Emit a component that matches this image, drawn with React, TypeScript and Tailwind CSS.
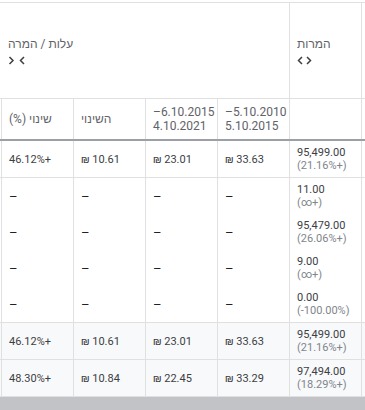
import { Fragment } from "react";

type Metric = { value: string; change: string };

const dataRows = [
  { pct: "46.12%+", diff: "₪ 10.61", a: "₪ 23.01", b: "₪ 33.63", conv: { value: "95,499.00", change: "(21.16%+)" } },
];

const subRows: Metric[] = [
  { value: "11.00", change: "(∞+)" },
  { value: "95,479.00", change: "(26.06%+)" },
  { value: "9.00", change: "(∞+)" },
  { value: "0.00", change: "(-100.00%)" },
];

const totals = [
  { pct: "46.12%+", diff: "₪ 10.61", a: "₪ 23.01", b: "₪ 33.63", conv: { value: "95,499.00", change: "(21.16%+)" } },
  { pct: "48.30%+", diff: "₪ 10.84", a: "₪ 22.45", b: "₪ 33.29", conv: { value: "97,494.00", change: "(18.29%+)" } },
];

function SortIcon({ outward }: { outward?: boolean }) {
  return outward ? (
    <svg width="16" height="9" viewBox="0 0 16 9" fill="none" stroke="#3c4043" strokeWidth="1.5">
      <path d="M5 1 L1.5 4.5 L5 8" />
      <path d="M10 1 L13.5 4.5 L10 8" />
    </svg>
  ) : (
    <svg width="18" height="9" viewBox="0 0 18 9" fill="none" stroke="#3c4043" strokeWidth="1.5">
      <path d="M1.5 1 L5 4.5 L1.5 8" />
      <path d="M16 1 L12.5 4.5 L16 8" />
    </svg>
  );
}

function Cell({ children }: { children?: React.ReactNode }) {
  return (
    <div className="w-[72px] shrink-0 border-r border-[#e0e0e0] pl-[7px] flex flex-col justify-center text-[11px] leading-[13px] text-[#3c4043]">
      {children}
    </div>
  );
}

function Dash() {
  return (
    <Cell>
      <span className="text-[13px] text-[#202124]">–</span>
    </Cell>
  );
}

function ConvCell({ m }: { m: Metric }) {
  return (
    <Cell>
      <span>{m.value}</span>
      <span className="text-[#80868b]">{m.change}</span>
    </Cell>
  );
}

function Edge() {
  return <div className="w-[2px] shrink-0 border-r border-[#e0e0e0]" />;
}

export default function App() {
  return (
    <div className="w-[365px] h-[410px] overflow-hidden bg-white pt-[2px] font-['Roboto','Liberation_Sans',sans-serif]">
      <div className="border-t border-[#e0e0e0]">
        {/* group header */}
        <div className="flex h-[96px] border-b border-[#e0e0e0]">
          <div className="w-[2px] shrink-0" />
          <div className="w-[288px] shrink-0 border-r border-[#e0e0e0] pl-[6px] flex flex-col justify-center gap-[5px]">
            <span dir="rtl" className="self-start text-[12px] leading-[14px] text-[#5f6368]">
              עלות / המרה
            </span>
            <SortIcon />
          </div>
          <div className="w-[72px] shrink-0 border-r border-[#e0e0e0] pl-[7px] flex flex-col justify-center gap-[5px]">
            <span dir="rtl" className="self-start text-[12px] leading-[14px] text-[#5f6368]">
              המרות
            </span>
            <SortIcon outward />
          </div>
          <div className="flex-1" />
        </div>

        {/* column header */}
        <div className="flex h-[42px] border-b-2 border-[#9aa0a6] text-[12px] leading-[14px] text-[#5f6368]">
          <Edge />
          <div className="w-[72px] shrink-0 border-r border-[#e0e0e0] pl-[7px] flex items-center">
            <span dir="rtl">שינוי (%)</span>
          </div>
          <div className="w-[72px] shrink-0 border-r border-[#e0e0e0] pl-[7px] flex items-center">
            <span dir="rtl">השינוי</span>
          </div>
          <div className="w-[72px] shrink-0 border-r border-[#e0e0e0] pl-[7px] flex flex-col justify-center">
            <span>–6.10.2015</span>
            <span>4.10.2021</span>
          </div>
          <div className="w-[72px] shrink-0 border-r border-[#e0e0e0] pl-[7px] flex flex-col justify-center">
            <span>–5.10.2010</span>
            <span>5.10.2015</span>
          </div>
          <div className="w-[72px] shrink-0 border-r border-[#e0e0e0]" />
          <div className="flex-1" />
        </div>

        {dataRows.map((r, i) => (
          <div key={i} className="flex h-[37px] border-b border-[#e0e0e0]">
            <Edge />
            <Cell>{r.pct}</Cell>
            <Cell>{r.diff}</Cell>
            <Cell>{r.a}</Cell>
            <Cell>{r.b}</Cell>
            <ConvCell m={r.conv} />
            <div className="flex-1" />
          </div>
        ))}

        {/* breakdown rows */}
        <div className="border-b border-[#e0e0e0]">
          {subRows.map((m, i) => (
            <div key={i} className="flex h-[36px]">
              <Edge />
              <Dash />
              <Dash />
              <Dash />
              <Dash />
              <ConvCell m={m} />
              <div className="flex-1" />
            </div>
          ))}
        </div>

        {totals.map((r, i) => (
          <Fragment key={i}>
            <div className="flex h-[37px] border-b border-[#e0e0e0] bg-[#f8f9fa]">
              <Edge />
              <Cell>{r.pct}</Cell>
              <Cell>{r.diff}</Cell>
              <Cell>{r.a}</Cell>
              <Cell>{r.b}</Cell>
              <ConvCell m={r.conv} />
              <div className="flex-1" />
            </div>
          </Fragment>
        ))}

        {/* horizontal scrollbar */}
        <div className="h-[14px] bg-[#c1c3c6]" />
      </div>
    </div>
  );
}
